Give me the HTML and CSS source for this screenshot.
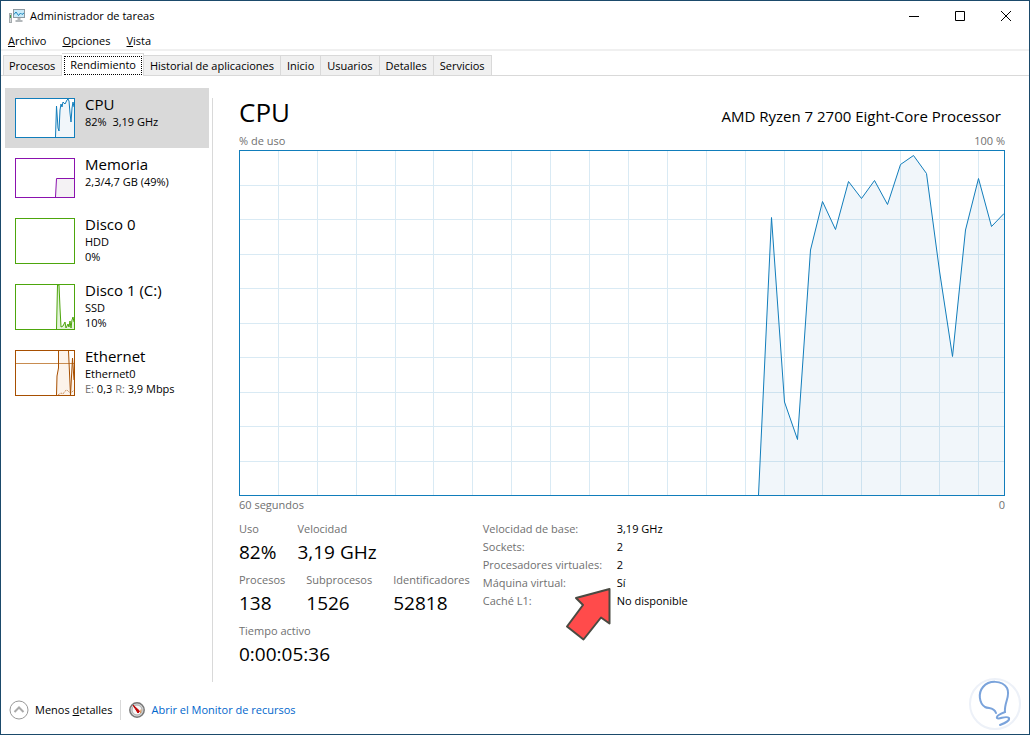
FILE: index.html
```html
<!DOCTYPE html>
<html lang="es">
<head>
    <meta charset="UTF-8">
    <meta name="viewport" content="width=device-width, initial-scale=1.0">
    <title>Administrador de tareas</title>
    <link rel="stylesheet" href="styles.css">
</head>
<body>
    <div class="window">
        <header class="title-bar">
            <svg class="app-icon" width="16" height="14" viewBox="0 0 16 14">
                <rect x="0.5" y="4.5" width="2" height="9" fill="#d4d7d9" stroke="#a4aaad"/>
                <rect x="1" y="6" width="1" height="3" fill="#3d9b46"/>
                <rect x="4.5" y="0.5" width="11" height="8" fill="#c9eaf8" stroke="#8e9aa2"/>
                <path d="M5 5.500L7 3L9.500 6.500L11.500 4L13 5.500L15 4" fill="none" stroke="#1b87bd"/>
                <path d="M8.500 9h3v2h2v2H6.500V11h2z" fill="#b3b8bb"/>
            </svg>
            <span class="title">Administrador de tareas</span>
            <div class="window-controls">
                <button class="control-btn" aria-label="Minimizar">
                    <svg width="10" height="10" viewBox="0 0 10 10"><path d="M0 5.500H10"/></svg>
                </button>
                <button class="control-btn" aria-label="Maximizar">
                    <svg width="10" height="10" viewBox="0 0 10 10"><path d="M0.500 0.500H9.500V9.500H0.500Z"/></svg>
                </button>
                <button class="control-btn" aria-label="Cerrar">
                    <svg width="10" height="10" viewBox="0 0 10 10"><path d="M0 0L10 10M10 0L0 10"/></svg>
                </button>
            </div>
        </header>

        <nav class="menu">
            <button class="menu-btn"><u>A</u>rchivo</button>
            <button class="menu-btn"><u>O</u>pciones</button>
            <button class="menu-btn"><u>V</u>ista</button>
        </nav>

        <div class="tabs" role="tablist">
            <button class="tab" role="tab">Procesos</button>
            <button class="tab active" role="tab" aria-selected="true"><span>Rendimiento</span></button>
            <button class="tab" role="tab">Historial de aplicaciones</button>
            <button class="tab" role="tab">Inicio</button>
            <button class="tab" role="tab">Usuarios</button>
            <button class="tab" role="tab">Detalles</button>
            <button class="tab" role="tab">Servicios</button>
        </div>

        <main class="content">
            <aside class="sidebar">
                <button class="resource selected">
                    <svg class="thumb cpu" width="60" height="40" viewBox="0 0 60 40">
                        <rect class="frame" x="0.5" y="0.5" width="59" height="39"/>
                        <path class="area" d="M40.500 39L41.500 8L43 30L44 33L45 12L46 6L47 9L48 4L50 6L51 4L52 2L53 1L54 3L55 15L56 24L57 10L58 4L59 9V39Z"/>
                        <path class="line" d="M40.500 39L41.500 8L43 30L44 33L45 12L46 6L47 9L48 4L50 6L51 4L52 2L53 1L54 3L55 15L56 24L57 10L58 4L59 9"/>
                    </svg>
                    <span class="resource-text">
                        <span class="resource-name">CPU</span>
                        <span>82%&nbsp; 3,19 GHz</span>
                    </span>
                </button>
                <button class="resource">
                    <svg class="thumb memory" width="60" height="40" viewBox="0 0 60 40">
                        <rect class="frame" x="0.5" y="0.5" width="59" height="39"/>
                        <path class="area" d="M40.500 39L41.500 20.500H59V39Z"/>
                        <path class="line" d="M40.500 39L41.500 20.500H59"/>
                    </svg>
                    <span class="resource-text">
                        <span class="resource-name">Memoria</span>
                        <span>2,3/4,7 GB (49%)</span>
                    </span>
                </button>
                <button class="resource">
                    <svg class="thumb disk" width="60" height="46" viewBox="0 0 60 46">
                        <rect class="frame" x="0.5" y="0.5" width="59" height="45"/>
                    </svg>
                    <span class="resource-text">
                        <span class="resource-name">Disco 0</span>
                        <span>HDD</span>
                        <span>0%</span>
                    </span>
                </button>
                <button class="resource">
                    <svg class="thumb disk" width="60" height="46" viewBox="0 0 60 46">
                        <rect class="frame" x="0.5" y="0.5" width="59" height="45"/>
                        <path class="area" d="M41.500 45L42.500 1H44L45 24L46 43L48 42L50 38L51 44L53 40L55 43L56 36L57 44L58 33L59 38V45Z"/>
                        <path class="line" d="M41.500 45L42.500 1H44L45 24L46 43L48 42L50 38L51 44L53 40L54 43L55 37L56 44L57 36L58 33L59 38"/>
                    </svg>
                    <span class="resource-text">
                        <span class="resource-name">Disco 1 (C:)</span>
                        <span>SSD</span>
                        <span>10%</span>
                    </span>
                </button>
                <button class="resource">
                    <svg class="thumb ethernet" width="60" height="46" viewBox="0 0 60 46">
                        <rect class="frame" x="0.5" y="0.5" width="59" height="45"/>
                        <path class="area" d="M41.500 45L42 26L43.500 18V1H53.500L55.500 45L58 8L59 45Z"/>
                        <path class="limit" d="M1 13.500H59"/>
                        <path class="line" d="M41.500 45L42 26L43.500 18V1M53.500 1L55.500 45L57.500 8L59 30"/>
                        <path class="sent" d="M43 45L46 43L48 44L50 41L52 40L54 42L56 43L59 40"/>
                    </svg>
                    <span class="resource-text">
                        <span class="resource-name">Ethernet</span>
                        <span>Ethernet0</span>
                        <span><i>E:</i> 0,3 <i>R:</i> 3,9 Mbps</span>
                    </span>
                </button>
            </aside>

            <section class="detail">
                <div class="detail-header">
                    <h1>CPU</h1>
                    <h2>AMD Ryzen 7 2700 Eight-Core Processor</h2>
                </div>
                <div class="axis">
                    <span>% de uso</span>
                    <span>100 %</span>
                </div>
                <div class="chart">
                    <svg viewBox="0 0 764 344" preserveAspectRatio="none">
                        <path class="grid" d="M38.500 0V344M77.500 0V344M116.500 0V344M155.500 0V344M193.500 0V344M232.500 0V344M271.500 0V344M310.500 0V344M349.500 0V344M388.500 0V344M427.500 0V344M466.500 0V344M505.500 0V344M544.500 0V344M582.500 0V344M621.500 0V344M660.500 0V344M699.500 0V344M738.500 0V344"/>
                        <path class="grid" d="M0 34.500H764M0 68.500H764M0 103.500H764M0 137.500H764M0 172.500H764M0 206.500H764M0 241.500H764M0 275.500H764M0 310.500H764"/>
                        <path class="area" d="M518.500 344L531.500 66.500L544.500 251L557.500 288.500L570.500 99L582.500 50.500L595.500 78.500L608.500 30.500L621.500 47.500L634.500 29.500L647.500 53.500L660.500 13.500L673.500 4.500L686.500 22.500L699.500 120L712.500 205.500L725.500 79L738.500 27.500L751.500 75.500L764 62.500V344Z"/>
                        <path class="line" d="M518.500 344L531.500 66.500L544.500 251L557.500 288.500L570.500 99L582.500 50.500L595.500 78.500L608.500 30.500L621.500 47.500L634.500 29.500L647.500 53.500L660.500 13.500L673.500 4.500L686.500 22.500L699.500 120L712.500 205.500L725.500 79L738.500 27.500L751.500 75.500L764 62.500"/>
                    </svg>
                </div>
                <div class="axis">
                    <span>60 segundos</span>
                    <span>0</span>
                </div>

                <div class="stats">
                    <div class="stats-main">
                        <dl class="stats-row">
                            <div><dt>Uso</dt><dd>82%</dd></div>
                            <div><dt>Velocidad</dt><dd>3,19 GHz</dd></div>
                        </dl>
                        <dl class="stats-row">
                            <div><dt>Procesos</dt><dd>138</dd></div>
                            <div><dt>Subprocesos</dt><dd>1526</dd></div>
                            <div><dt>Identificadores</dt><dd>52818</dd></div>
                        </dl>
                        <dl class="stats-row">
                            <div><dt>Tiempo activo</dt><dd>0:00:05:36</dd></div>
                        </dl>
                    </div>
                    <dl class="specs">
                        <dt>Velocidad de base:</dt><dd>3,19 GHz</dd>
                        <dt>Sockets:</dt><dd>2</dd>
                        <dt>Procesadores virtuales:</dt><dd>2</dd>
                        <dt>Máquina virtual:</dt><dd>Sí</dd>
                        <dt>Caché L1:</dt><dd>No disponible</dd>
                    </dl>
                    <svg class="arrow" width="48" height="56" viewBox="0 0 48 56">
                        <path d="M45.500 3L12 12L19 19L3 40.500L19.500 53.500L37 31.500L45.500 37.500Z"/>
                    </svg>
                </div>
            </section>
        </main>

        <footer class="footer">
            <button class="less-btn">
                <svg width="20" height="20" viewBox="0 0 20 20">
                    <circle cx="10" cy="10" r="9" fill="none" stroke="#999"/>
                    <path d="M5.500 12L10 7.500L14.500 12" fill="none" stroke="#aaa" stroke-width="2"/>
                </svg>
                <span>Menos <u>d</u>etalles</span>
            </button>
            <a class="monitor-link" href="#">
                <svg width="16" height="16" viewBox="0 0 16 16">
                    <circle cx="8" cy="8" r="7.200" fill="#d8d8d8" stroke="#777" stroke-width="1.500"/>
                    <circle cx="8" cy="8" r="5" fill="#f8f8f8" stroke="#aaa"/>
                    <path d="M4 3L10.500 9L9 11Z" fill="#c00000" stroke="#c00000"/>
                    <path d="M12 7.500L11.500 11" stroke="#dc8c46"/>
                </svg>
                <span>Abrir el Monitor de recursos</span>
            </a>
        </footer>

        <svg class="badge" width="54" height="54" viewBox="0 0 54 54">
            <circle cx="27" cy="27" r="25" fill="#fff" stroke="#edf1f8" stroke-width="2"/>
            <path d="M28 36C26 30 21 32 17 30C11 26 10 16 15 10C21 3 34 3 39 11C43 19 36 25 37 35C32 37 28 39 29 41C31 43 38 38 41 41C42 44 37 46 32 48" fill="none" stroke="#7aa3db" stroke-width="2" stroke-linecap="round"/>
        </svg>
    </div>
</body>
</html>
```
FILE: styles.css
```css
* {
    box-sizing: border-box;
    margin: 0;
    padding: 0;
}

body {
    font-family: 'Segoe UI', 'Open Sans', 'Noto Sans', sans-serif;
    font-size: 11px;
    line-height: 16px;
    color: #000;
    background: #fff;
}

button {
    font: inherit;
    color: inherit;
    background: none;
    border: none;
    text-align: left;
}

.window {
    position: relative;
    display: flex;
    flex-direction: column;
    min-height: 100vh;
    border: 1px solid #1b4a6b;
}

.title-bar {
    display: flex;
    align-items: center;
    height: 30px;
    padding-left: 8px;
    gap: 5px;
}

.window-controls {
    display: flex;
    align-self: stretch;
    margin-left: auto;
}

.control-btn {
    display: flex;
    align-items: center;
    justify-content: center;
    width: 46px;
}

.control-btn path {
    fill: none;
    stroke: #000;
}

.menu {
    display: flex;
    gap: 16px;
    height: 20px;
    padding: 2px 0 0 7px;
    border-bottom: 2px solid #f0f0f0;
}

/* Tabs */
.tabs {
    display: flex;
    align-items: flex-end;
    height: 25px;
    padding-left: 2px;
    border-bottom: 1px solid #d9d9d9;
}

.tab {
    height: 20px;
    padding: 1px 6px 0;
    background: #f0f0f0;
    border: 1px solid #d9d9d9;
    border-width: 1px 1px 0 0;
}

.tab:first-child {
    padding-left: 5px;
    border-left-width: 1px;
}

.tab.active {
    height: 23px;
    margin-bottom: -1px;
    padding: 2px 1px 1px 2px;
    background: #fff;
}

.tab.active span {
    display: block;
    padding: 0 5px 1px;
    border: 1px dotted #000;
}

.content {
    display: flex;
    flex: 1;
    padding: 12px 24px 0 4px;
}

/* Resource list */
.sidebar {
    flex: none;
    width: 204px;
}

.resource {
    display: flex;
    align-items: flex-start;
    gap: 10px;
    width: 100%;
    padding: 10px;
}

.resource.selected {
    background: #d9d9d9;
}

.resource-text {
    display: flex;
    flex-direction: column;
    height: 40px;
    margin-top: -3px;
    line-height: 15px;
    white-space: nowrap;
}

.resource-name {
    padding-bottom: 1px;
    font-size: 15px;
    line-height: 18px;
}

.resource i {
    font-style: normal;
    color: #707070;
}

.thumb {
    flex: none;
}

.frame {
    fill: #fff;
}

.thumb .line,
.limit,
.sent {
    fill: none;
}

.cpu {
    stroke: #117dbb;
}

.memory {
    stroke: #8b12ae;
}

.disk {
    stroke: #4da60c;
}

.ethernet {
    stroke: #a74f01;
}

.thumb .area {
    stroke: none;
}

.cpu .area {
    fill: #f1f6fa;
}

.memory .area {
    fill: #f4f2f4;
}

.disk .area {
    fill: #e4f3da;
}

.ethernet .area {
    fill: #fcf3eb;
}

.thumb .limit {
    stroke: #c88c50;
}

.sent {
    stroke-dasharray: 2 1;
    opacity: 0.6;
}

/* Detail pane */
.detail {
    display: flex;
    flex: 1;
    flex-direction: column;
    min-width: 0;
    margin: 10px 0 0 3px;
    padding-left: 26px;
    border-left: 1px solid #d9d9d9;
}

.detail-header {
    display: flex;
    align-items: baseline;
    justify-content: space-between;
    height: 35px;
    padding-right: 4px;
}

.detail-header h1 {
    font-size: 26px;
    font-weight: 400;
    line-height: 28px;
}

.detail-header h2 {
    font-size: 15px;
    font-weight: 400;
}

.axis {
    display: flex;
    justify-content: space-between;
    height: 17px;
    color: #707070;
}

.chart {
    flex: 1;
    min-height: 200px;
    border: 1px solid #117dbb;
    position: relative;
}

.chart svg {
    position: absolute;
    width: 100%;
    height: 100%;
}

.chart path {
    fill: none;
    vector-effect: non-scaling-stroke;
}

.chart .grid {
    stroke: #d9eaf4;
}

.chart .area {
    fill: rgba(17, 100, 170, 0.06);
}

.chart .line {
    stroke: #117dbb;
}

.chart + .axis {
    height: 24px;
    padding-top: 1px;
}

.stats {
    position: relative;
    display: flex;
    gap: 13px;
    height: 162px;
}

.stats dt {
    color: #707070;
}

.stats-row {
    display: flex;
    gap: 21px;
    height: 51px;
    padding-top: 1px;
}

.stats-row dd {
    font-size: 19px;
    line-height: 30px;
}

.specs {
    display: grid;
    grid-template-columns: 134px auto;
    align-content: start;
    line-height: 18px;
}

.arrow {
    position: absolute;
    left: 325px;
    top: 66px;
}

.arrow path {
    fill: #ff4b4b;
    stroke: #4a4a42;
    stroke-width: 2;
    stroke-linejoin: round;
}

/* Footer */
.footer {
    display: flex;
    align-items: center;
    height: 52px;
    padding: 3px 8px 0;
}

.less-btn,
.monitor-link {
    display: flex;
    align-items: center;
}

.less-btn {
    gap: 6px;
    padding-right: 8px;
    border-right: 1px solid #d9d9d9;
}

.monitor-link {
    gap: 6px;
    padding-left: 8px;
    color: #0066cc;
    text-decoration: none;
}

.badge {
    position: absolute;
    right: 7px;
    bottom: 3px;
}
```
